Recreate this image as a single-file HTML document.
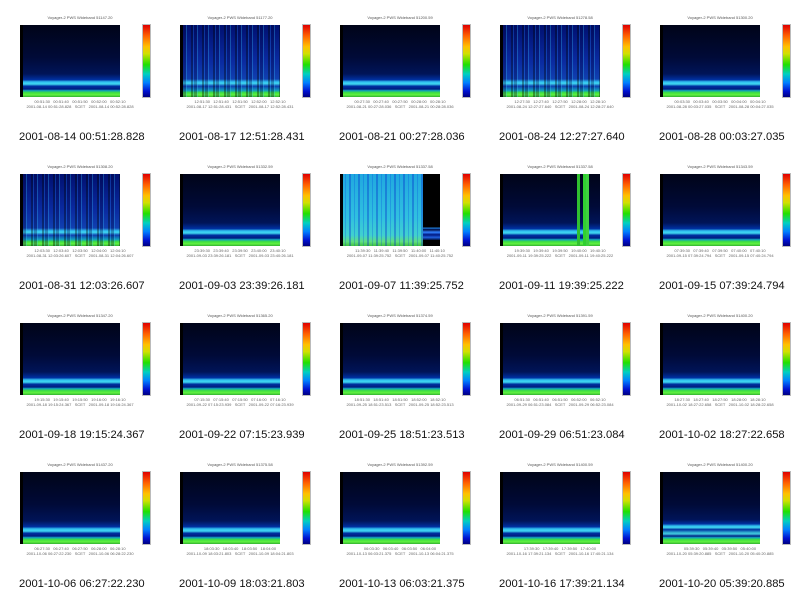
<!DOCTYPE html>
<html><head><meta charset="utf-8">
<style>
body{margin:0;background:#fff;width:800px;height:596px;position:relative;overflow:hidden;font-family:"Liberation Sans",sans-serif}
.c{position:absolute;width:160px;height:149px}
.t{position:absolute;left:0;width:160px;top:15px;text-align:center;font-size:4px;color:#555}
.p{position:absolute;left:20px;top:25px;width:100px;height:72px;
background:
linear-gradient(90deg,#000 0,#000 3px,transparent 3px),
linear-gradient(180deg,#000418 0%,#000a38 45%,#001458 68%,#0030a0 76%,#30c0f0 79%,#40d8f0 82%,#0030a0 85%,#001c80 89%,#10a0c0 91%,#40e040 94%,#60f040 97%,#30b030 100%)}
.s1 .p,.s3 .p,.s5 .p{background:
linear-gradient(90deg,#000 0,#000 3px,transparent 3px),
repeating-linear-gradient(90deg,rgba(0,0,0,.35) 0 2px,rgba(40,140,255,.25) 2px 3px,rgba(0,0,60,.3) 3px 6px,rgba(60,200,255,.3) 6px 7px,transparent 7px 11px),
linear-gradient(180deg,#001070 0%,#0a2aa0 50%,#1040b0 75%,#30c0f0 79%,#40d8f0 81%,#1040b0 85%,#10a0c0 91%,#40e040 94%,#60f040 97%,#30b030 100%)}
.s7 .p{background:
linear-gradient(90deg,#000 0,#000 3px,transparent 3px,transparent 83px,#000 83px),
repeating-linear-gradient(90deg,rgba(0,40,200,.35) 0 2px,transparent 2px 5px,rgba(0,60,220,.25) 5px 6px,transparent 6px 9px),
linear-gradient(180deg,#20a8e0 0%,#30c0e0 60%,#40d0d0 85%,#60e080 94%,#40c040 100%)}
.s7 .p:after{content:"";position:absolute;left:83px;right:0;top:74%;height:18%;background:linear-gradient(180deg,#000 0,#2080e0 8%,#000a40 20%,#3080ff 40%,#001880 60%,#2060e0 80%,#001040 100%)}
.s8 .p:after{content:"";position:absolute;top:0;bottom:0;left:77px;width:3px;background:#30c030;box-shadow:6px 0 0 0 #30d030,9px 0 0 0 #40d040}
.cb{position:absolute;left:143px;top:25px;width:7px;height:72px;background:linear-gradient(180deg,#e00000 0%,#ff6000 15%,#ffc000 30%,#d0e000 40%,#20e000 55%,#00d0c0 68%,#0080ff 80%,#0010d0 92%,#000080 100%);outline:1px solid #bbb}
.yl{position:absolute;left:126px;top:25px;width:6px;height:72px}
.x{position:absolute;left:0;width:160px;top:99px;text-align:center;font-size:4px;color:#666;line-height:5px}
.cap{position:absolute;left:19px;top:129px;font-size:11.2px;color:#111;white-space:nowrap;line-height:16px}
.ax{position:absolute;left:12px;top:24px;font-size:3.5px;color:#666;line-height:6px}
</style></head><body>

<div class="c s0" style="left:0;top:0"><div class="t">Voyager-2 PWS Wideband 51147.20</div><div class="p"></div><div class="cb"></div><div class="x">00:51:30 &nbsp; 00:51:40 &nbsp; 00:51:50 &nbsp; 00:52:00 &nbsp; 00:52:10<br>2001-08-14 00:51:28.828 &nbsp; SCET &nbsp; 2001-08-14 00:52:28.828</div><div class="cap">2001-08-14 00:51:28.828</div></div>
<div class="c s1" style="left:160px;top:0"><div class="t">Voyager-2 PWS Wideband 51177.20</div><div class="p"></div><div class="cb"></div><div class="x">12:51:30 &nbsp; 12:51:40 &nbsp; 12:51:50 &nbsp; 12:52:00 &nbsp; 12:52:10<br>2001-08-17 12:51:28.431 &nbsp; SCET &nbsp; 2001-08-17 12:52:28.431</div><div class="cap">2001-08-17 12:51:28.431</div></div>
<div class="c s2" style="left:320px;top:0"><div class="t">Voyager-2 PWS Wideband 51200.59</div><div class="p"></div><div class="cb"></div><div class="x">00:27:30 &nbsp; 00:27:40 &nbsp; 00:27:50 &nbsp; 00:28:00 &nbsp; 00:28:10<br>2001-08-21 00:27:28.036 &nbsp; SCET &nbsp; 2001-08-21 00:28:28.036</div><div class="cap">2001-08-21 00:27:28.036</div></div>
<div class="c s3" style="left:480px;top:0"><div class="t">Voyager-2 PWS Wideband 51278.58</div><div class="p"></div><div class="cb"></div><div class="x">12:27:30 &nbsp; 12:27:40 &nbsp; 12:27:50 &nbsp; 12:28:00 &nbsp; 12:28:10<br>2001-08-24 12:27:27.640 &nbsp; SCET &nbsp; 2001-08-24 12:28:27.640</div><div class="cap">2001-08-24 12:27:27.640</div></div>
<div class="c s4" style="left:640px;top:0"><div class="t">Voyager-2 PWS Wideband 51300.20</div><div class="p"></div><div class="cb"></div><div class="x">00:03:30 &nbsp; 00:03:40 &nbsp; 00:03:50 &nbsp; 00:04:00 &nbsp; 00:04:10<br>2001-08-28 00:03:27.035 &nbsp; SCET &nbsp; 2001-08-28 00:04:27.035</div><div class="cap">2001-08-28 00:03:27.035</div></div>

<div class="c s5" style="left:0;top:149px"><div class="t">Voyager-2 PWS Wideband 51308.20</div><div class="p"></div><div class="cb"></div><div class="x">12:03:30 &nbsp; 12:03:40 &nbsp; 12:03:50 &nbsp; 12:04:00 &nbsp; 12:04:10<br>2001-08-31 12:03:26.607 &nbsp; SCET &nbsp; 2001-08-31 12:04:26.607</div><div class="cap">2001-08-31 12:03:26.607</div></div>
<div class="c s6" style="left:160px;top:149px"><div class="t">Voyager-2 PWS Wideband 51332.59</div><div class="p"></div><div class="cb"></div><div class="x">23:39:30 &nbsp; 23:39:40 &nbsp; 23:39:50 &nbsp; 23:40:00 &nbsp; 23:40:10<br>2001-09-03 23:39:26.181 &nbsp; SCET &nbsp; 2001-09-03 23:40:26.181</div><div class="cap">2001-09-03 23:39:26.181</div></div>
<div class="c s7" style="left:320px;top:149px"><div class="t">Voyager-2 PWS Wideband 51337.58</div><div class="p"></div><div class="cb"></div><div class="x">11:39:30 &nbsp; 11:39:40 &nbsp; 11:39:50 &nbsp; 11:40:00 &nbsp; 11:40:10<br>2001-09-07 11:39:25.752 &nbsp; SCET &nbsp; 2001-09-07 11:40:25.752</div><div class="cap">2001-09-07 11:39:25.752</div></div>
<div class="c s8" style="left:480px;top:149px"><div class="t">Voyager-2 PWS Wideband 51337.58</div><div class="p"></div><div class="cb"></div><div class="x">19:39:30 &nbsp; 19:39:40 &nbsp; 19:39:50 &nbsp; 19:40:00 &nbsp; 19:40:10<br>2001-09-11 19:39:25.222 &nbsp; SCET &nbsp; 2001-09-11 19:40:25.222</div><div class="cap">2001-09-11 19:39:25.222</div></div>
<div class="c s9" style="left:640px;top:149px"><div class="t">Voyager-2 PWS Wideband 51343.59</div><div class="p"></div><div class="cb"></div><div class="x">07:39:30 &nbsp; 07:39:40 &nbsp; 07:39:50 &nbsp; 07:40:00 &nbsp; 07:40:10<br>2001-09-15 07:39:24.794 &nbsp; SCET &nbsp; 2001-09-15 07:40:24.794</div><div class="cap">2001-09-15 07:39:24.794</div></div>

<div class="c s10" style="left:0;top:298px"><div class="t">Voyager-2 PWS Wideband 51347.20</div><div class="p"></div><div class="cb"></div><div class="x">19:15:30 &nbsp; 19:15:40 &nbsp; 19:15:50 &nbsp; 19:16:00 &nbsp; 19:16:10<br>2001-09-18 19:15:24.367 &nbsp; SCET &nbsp; 2001-09-18 19:16:24.367</div><div class="cap">2001-09-18 19:15:24.367</div></div>
<div class="c s11" style="left:160px;top:298px"><div class="t">Voyager-2 PWS Wideband 51365.20</div><div class="p"></div><div class="cb"></div><div class="x">07:15:30 &nbsp; 07:15:40 &nbsp; 07:15:50 &nbsp; 07:16:00 &nbsp; 07:16:10<br>2001-09-22 07:15:23.939 &nbsp; SCET &nbsp; 2001-09-22 07:16:23.939</div><div class="cap">2001-09-22 07:15:23.939</div></div>
<div class="c s12" style="left:320px;top:298px"><div class="t">Voyager-2 PWS Wideband 51374.59</div><div class="p"></div><div class="cb"></div><div class="x">18:51:30 &nbsp; 18:51:40 &nbsp; 18:51:50 &nbsp; 18:52:00 &nbsp; 18:52:10<br>2001-09-25 18:51:23.513 &nbsp; SCET &nbsp; 2001-09-25 18:52:23.513</div><div class="cap">2001-09-25 18:51:23.513</div></div>
<div class="c s13" style="left:480px;top:298px"><div class="t">Voyager-2 PWS Wideband 51391.59</div><div class="p"></div><div class="cb"></div><div class="x">06:51:30 &nbsp; 06:51:40 &nbsp; 06:51:50 &nbsp; 06:52:00 &nbsp; 06:52:10<br>2001-09-29 06:51:23.084 &nbsp; SCET &nbsp; 2001-09-29 06:52:23.084</div><div class="cap">2001-09-29 06:51:23.084</div></div>
<div class="c s14" style="left:640px;top:298px"><div class="t">Voyager-2 PWS Wideband 51400.20</div><div class="p"></div><div class="cb"></div><div class="x">18:27:30 &nbsp; 18:27:40 &nbsp; 18:27:50 &nbsp; 18:28:00 &nbsp; 18:28:10<br>2001-10-02 18:27:22.658 &nbsp; SCET &nbsp; 2001-10-02 18:28:22.658</div><div class="cap">2001-10-02 18:27:22.658</div></div>

<div class="c s15" style="left:0;top:447px"><div class="t">Voyager-2 PWS Wideband 51437.20</div><div class="p"></div><div class="cb"></div><div class="x">06:27:30 &nbsp; 06:27:40 &nbsp; 06:27:50 &nbsp; 06:28:00 &nbsp; 06:28:10<br>2001-10-06 06:27:22.230 &nbsp; SCET &nbsp; 2001-10-06 06:28:22.230</div><div class="cap">2001-10-06 06:27:22.230</div></div>
<div class="c s16" style="left:160px;top:447px"><div class="t">Voyager-2 PWS Wideband 51375.58</div><div class="p"></div><div class="cb"></div><div class="x">18:03:30 &nbsp; 18:03:40 &nbsp; 18:03:50 &nbsp; 18:04:00<br>2001-10-09 18:03:21.803 &nbsp; SCET &nbsp; 2001-10-09 18:04:21.803</div><div class="cap">2001-10-09 18:03:21.803</div></div>
<div class="c s17" style="left:320px;top:447px"><div class="t">Voyager-2 PWS Wideband 51392.59</div><div class="p"></div><div class="cb"></div><div class="x">06:03:30 &nbsp; 06:03:40 &nbsp; 06:03:50 &nbsp; 06:04:00<br>2001-10-13 06:03:21.375 &nbsp; SCET &nbsp; 2001-10-13 06:04:21.375</div><div class="cap">2001-10-13 06:03:21.375</div></div>
<div class="c s18" style="left:480px;top:447px"><div class="t">Voyager-2 PWS Wideband 51400.59</div><div class="p"></div><div class="cb"></div><div class="x">17:39:30 &nbsp; 17:39:40 &nbsp; 17:39:50 &nbsp; 17:40:00<br>2001-10-16 17:39:21.134 &nbsp; SCET &nbsp; 2001-10-16 17:40:21.134</div><div class="cap">2001-10-16 17:39:21.134</div></div>
<div class="c s19" style="left:640px;top:447px"><div class="t">Voyager-2 PWS Wideband 51400.20</div><div class="p" style="background:linear-gradient(90deg,#000 0,#000 3px,transparent 3px),linear-gradient(180deg,#000418 0%,#000a38 45%,#001458 66%,#0030a0 72%,#30c0f0 75%,#40d8f0 77%,#0030a0 80%,#30b0d0 84%,#40c8e0 86%,#001c80 89%,#10a0c0 91%,#40e040 94%,#60f040 97%,#30b030 100%)"></div><div class="cb"></div><div class="x">05:39:30 &nbsp; 05:39:40 &nbsp; 05:39:50 &nbsp; 05:40:00<br>2001-10-20 05:39:20.885 &nbsp; SCET &nbsp; 2001-10-20 05:40:20.885</div><div class="cap">2001-10-20 05:39:20.885</div></div>

</body></html>
